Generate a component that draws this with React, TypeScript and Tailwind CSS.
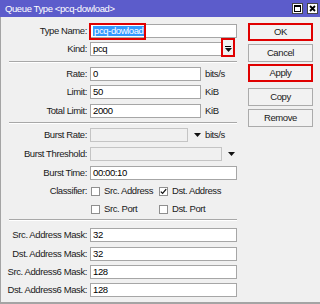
import React from "react";

const font = "font-['Liberation_Sans',Arial,sans-serif] text-[9.5px] leading-none tracking-[-0.4px]";

function Arrow({ className = "" }: { className?: string }) {
  return (
    <svg width="7" height="4" viewBox="0 0 7 4" className={className}>
      <path d="M0 0h7L3.5 4z" fill="#111" />
    </svg>
  );
}

function Label({ text }: { text: string }) {
  return <div className="w-[87px] shrink-0 text-right text-[#1a1a1a] pr-[1px]">{text}</div>;
}

function Input({
  value = "",
  width,
  disabled = false,
  children,
}: {
  value?: string;
  width: string;
  disabled?: boolean;
  children?: React.ReactNode;
}) {
  return (
    <div
      className={`relative ml-[2px] flex h-[14px] items-center border px-[2px] text-black ${width} ${
        disabled ? "border-[#c4c4c4] bg-[#f0f0f0]" : "border-[#a6a6a6] bg-white"
      }`}
    >
      {children ?? value}
    </div>
  );
}

function Row({ className = "", children }: { className?: string; children: React.ReactNode }) {
  return <div className={`flex h-[14px] items-center ${className}`}>{children}</div>;
}

function Sep({ className = "" }: { className?: string }) {
  return <div className={`ml-[8px] w-[228px] border-t border-b border-t-[#a8a8a8] border-b-white ${className}`} />;
}

function Check({ label, checked = false }: { label: string; checked?: boolean }) {
  return (
    <div className="flex items-center">
      <div className="flex h-[9px] w-[9px] items-center justify-center border border-[#8f8f8f] bg-white">
        {checked && (
          <svg width="7" height="7" viewBox="0 0 7 7">
            <path d="M0.8 3.6l1.8 1.8L6.2 1.2" stroke="#111" strokeWidth="1.3" fill="none" />
          </svg>
        )}
      </div>
      <span className="ml-[4px] text-[#1a1a1a]">{label}</span>
    </div>
  );
}

function Btn({ label, red = false, className = "" }: { label: string; red?: boolean; className?: string }) {
  return (
    <div
      className={`flex h-[18px] w-[65px] items-center justify-center text-[#1a1a1a] ${
        red ? "border-2 border-[#e00000] bg-[#f2f2f2]" : "border border-[#ababab] bg-[#f2f2f2]"
      } ${className}`}
    >
      {label}
    </div>
  );
}

export default function App() {
  return (
    <div className={`h-[304px] w-[320px] overflow-hidden bg-[#f0f0f0] ${font}`}>
      {/* title bar */}
      <div className="flex h-[17px] items-center justify-between bg-[#5c5ccb] pl-[5px] pr-[2px] text-white">
        <span>Queue Type &lt;pcq-dowload&gt;</span>
        <div className="flex items-center gap-[4px]">
          <div className="flex h-[11px] w-[11px] items-center justify-center border border-[#444] bg-white">
            <div className="h-[7px] w-[7px] border border-t-2 border-black" />
          </div>
          <div className="flex h-[11px] w-[11px] items-center justify-center border border-[#444] bg-white">
            <svg width="7" height="7" viewBox="0 0 7 7">
              <path d="M1 1l5 5M6 1L1 6" stroke="#000" strokeWidth="1.8" />
            </svg>
          </div>
        </div>
      </div>

      <div className="flex h-[287px] border-b-2 border-l border-[#a4a4a4]">
        {/* form column */}
        <div className="w-[239px] pt-[7px]">
          <Row>
            <Label text="Type Name:" />
            <Input width="w-[147px]">
              <span className="bg-[#3399ff] px-[1px] text-white">pcq-dowload</span>
              <div className="absolute left-[-2px] top-[-2px] h-[17px] w-[57px] border-2 border-[#e00000]" />
            </Input>
          </Row>
          <Row className="mt-[4px]">
            <Label text="Kind:" />
            <Input width="w-[132px]" value="pcq" />
            <div className="relative flex h-[14px] w-[12px] flex-col items-center justify-center">
              <div className="mb-[1px] h-[1px] w-[6px] bg-black" />
              <Arrow />
              <div className="absolute -bottom-[1px] -left-[1px] -right-[1px] -top-[4px] border-2 border-[#e00000]" />
            </div>
          </Row>
          <Sep className="mt-[5px]" />
          <Row className="mt-[4px]">
            <Label text="Rate:" />
            <Input width="w-[111px]" value="0" />
            <span className="ml-[4px] text-[#1a1a1a]">bits/s</span>
          </Row>
          <Row className="mt-[4px]">
            <Label text="Limit:" />
            <Input width="w-[111px]" value="50" />
            <span className="ml-[4px] text-[#1a1a1a]">KiB</span>
          </Row>
          <Row className="mt-[5px]">
            <Label text="Total Limit:" />
            <Input width="w-[111px]" value="2000" />
            <span className="ml-[4px] text-[#1a1a1a]">KiB</span>
          </Row>
          <Sep className="mt-[4px]" />
          <Row className="mt-[4px]">
            <Label text="Burst Rate:" />
            <Input width="w-[98px]" disabled />
            <Arrow className="ml-[6px]" />
            <span className="ml-[4px] text-[#1a1a1a]">bits/s</span>
          </Row>
          <Row className="mt-[5px]">
            <Label text="Burst Threshold:" />
            <Input width="w-[132px]" disabled />
            <Arrow className="ml-[6px]" />
          </Row>
          <Row className="mt-[5px]">
            <Label text="Burst Time:" />
            <Input width="w-[147px]" value="00:00:10" />
          </Row>
          <Row className="mt-[4px]">
            <Label text="Classifier:" />
            <div className="ml-[3px] w-[68px]">
              <Check label="Src. Address" />
            </div>
            <Check label="Dst. Address" checked />
          </Row>
          <Row className="mt-[4px]">
            <div className="w-[87px]" />
            <div className="ml-[3px] w-[68px]">
              <Check label="Src. Port" />
            </div>
            <Check label="Dst. Port" />
          </Row>
          <Sep className="mt-[3px]" />
          <Row className="mt-[7px]">
            <Label text="Src. Address Mask:" />
            <Input width="w-[147px]" value="32" />
          </Row>
          <Row className="mt-[5px]">
            <Label text="Dst. Address Mask:" />
            <Input width="w-[147px]" value="32" />
          </Row>
          <Row className="mt-[4px]">
            <Label text="Src. Address6 Mask:" />
            <Input width="w-[147px]" value="128" />
          </Row>
          <Row className="mt-[4px]">
            <Label text="Dst. Address6 Mask:" />
            <Input width="w-[147px]" value="128" />
          </Row>
        </div>

        {/* buttons column */}
        <div className="ml-[8px] pt-[6px]">
          <Btn label="OK" red />
          <Btn label="Cancel" className="mt-[3px]" />
          <Btn label="Apply" red className="mt-[2px]" />
          <Btn label="Copy" className="mt-[6px]" />
          <Btn label="Remove" className="mt-[3px]" />
        </div>
      </div>
    </div>
  );
}
